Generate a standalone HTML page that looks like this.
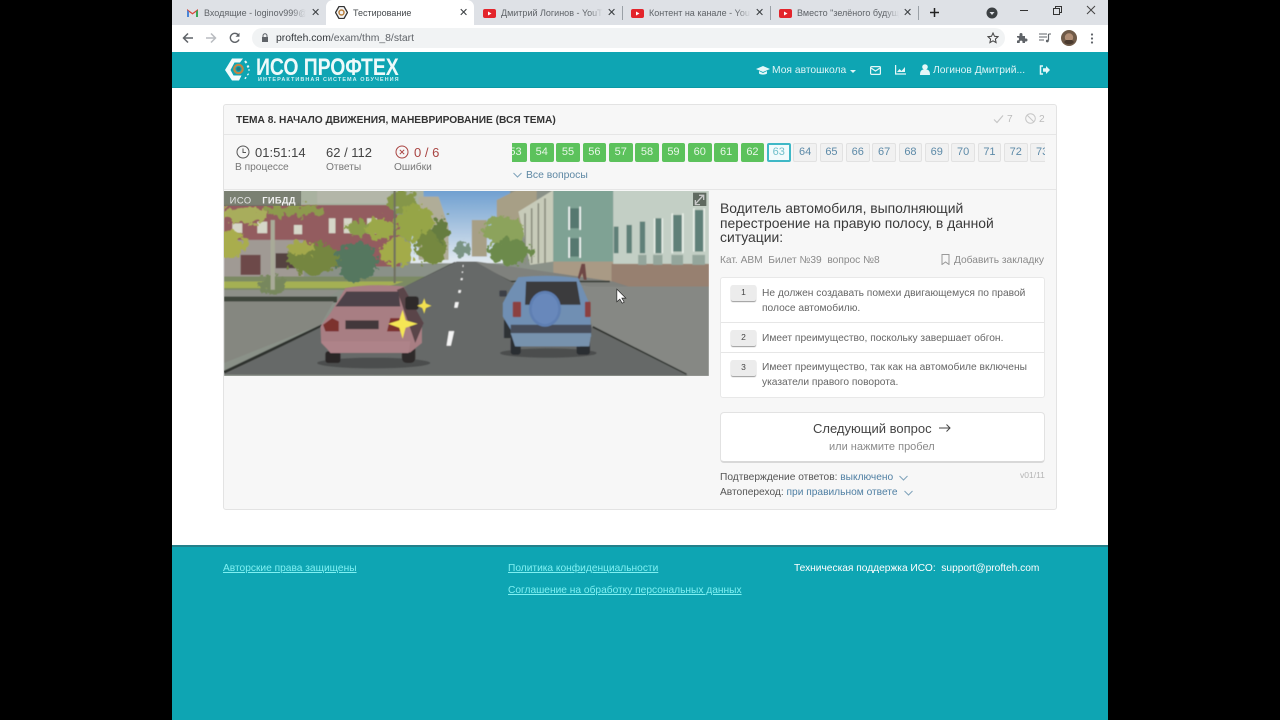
<!DOCTYPE html>
<html lang="ru"><head><meta charset="utf-8"><title>Тестирование</title>
<style>
html,body{margin:0;padding:0;background:#000;width:1280px;height:720px;overflow:hidden}
*{box-sizing:border-box}
body{font-family:"Liberation Sans","DejaVu Sans",sans-serif;position:relative}
.a{position:absolute;white-space:nowrap}
svg{display:block}
.tab{font-size:9px;line-height:12px;color:#5f6368;top:7px;overflow:hidden;-webkit-mask-image:linear-gradient(90deg,#000 86%,transparent);mask-image:linear-gradient(90deg,#000 86%,transparent)}
.x{font-size:11px;color:#3c4043;top:6px;line-height:14px}
.q{position:absolute;top:3px;width:23.500px;height:19px;border-radius:2px;font-size:11px;line-height:19px;text-align:center}
.g{background:#5cc25c;color:#e8f6e8}
.n{background:#f1f1f1;border:1px solid #e2e2e2;color:#5d8aa8;line-height:17px}
.c{background:#f2fbfc;border:2px solid #3fb8c6;color:#6fbfca;line-height:15px}
.num{position:absolute;left:731px;width:25px;height:16px;background:#ececec;border-radius:2px;box-shadow:0 1px 1px #999;font:8.500px/15px "Liberation Sans",sans-serif;color:#444;text-align:center}
.ans{font-size:10.230px;line-height:15px;color:#666;left:762px}
.ft{font-size:10.200px;top:562px;line-height:13px;color:#7ff0f2;text-decoration:underline}
.s{font-size:10.200px;line-height:13px}
</style></head><body>

<!-- chrome -->
<div class="a" style="left:172px;top:0;width:936px;height:25px;background:#dee1e6"></div>
<div class="a" style="left:172px;top:25px;width:936px;height:27px;background:#fff"></div>
<div class="a" style="left:326px;top:0;width:148px;height:26px;background:#fff;border-radius:7px 7px 0 0"></div>
<svg class="a" style="left:187px;top:9px" width="11" height="8" viewBox="0 0 11 8"><path d="M0 8V0l5.500 4L11 0v8H9V3L5.500 5.500 2 3v5z" fill="#d9473a"/><path d="M2 2.500V8H0V1z" fill="#4a86d8"/><path d="M9 2.500V8h2V1z" fill="#3aa757"/></svg>
<div class="a tab" style="left:204px;width:102px">Входящие - loginov999@gmail.com</div>
<div class="a x" style="left:311px">✕</div>
<svg class="a" style="left:335px;top:6px" width="13" height="13" viewBox="0 0 13 13"><path d="M4 .5h5l3.500 6-3.500 6H4L.5 6.500z" fill="#f4f4f4" stroke="#333" stroke-width="1.300"/><circle cx="6.500" cy="6.500" r="2.500" fill="none" stroke="#b9803e" stroke-width="1.500"/></svg>
<div class="a" style="left:353px;top:7px;font-size:9px;line-height:12px;color:#45494d">Тестирование</div>
<div class="a x" style="left:459px">✕</div>
<svg class="a" style="left:483px;top:9px" width="13" height="9" viewBox="0 0 13 9"><rect width="13" height="9" rx="2" fill="#e3242b"/><path d="M5 2.500v4l3.500-2z" fill="#fff"/></svg>
<div class="a tab" style="left:501px;width:102px">Дмитрий Логинов - YouTube</div>
<div class="a x" style="left:607px">✕</div>
<div class="a" style="left:622px;top:6px;width:1px;height:14px;background:#9aa0a6"></div>
<svg class="a" style="left:631px;top:9px" width="13" height="9" viewBox="0 0 13 9"><rect width="13" height="9" rx="2" fill="#e3242b"/><path d="M5 2.500v4l3.500-2z" fill="#fff"/></svg>
<div class="a tab" style="left:649px;width:102px">Контент на канале - YouTube</div>
<div class="a x" style="left:755px">✕</div>
<div class="a" style="left:770px;top:6px;width:1px;height:14px;background:#9aa0a6"></div>
<svg class="a" style="left:779px;top:9px" width="13" height="9" viewBox="0 0 13 9"><rect width="13" height="9" rx="2" fill="#e3242b"/><path d="M5 2.500v4l3.500-2z" fill="#fff"/></svg>
<div class="a tab" style="left:797px;width:102px">Вместо "зелёного будущего"</div>
<div class="a x" style="left:903px">✕</div>
<div class="a" style="left:918px;top:6px;width:1px;height:14px;background:#9aa0a6"></div>
<svg class="a" style="left:929px;top:7px" width="11" height="11" viewBox="0 0 11 11"><path d="M5.500 1v9M1 5.500h9" stroke="#222" stroke-width="1.500"/></svg>
<svg class="a" style="left:986px;top:7px" width="12" height="12" viewBox="0 0 12 12"><circle cx="6" cy="6" r="5.500" fill="#3c4043"/><path d="M3.500 5h5L6 8z" fill="#dee1e6"/></svg>
<div class="a" style="left:1020px;top:10px;width:8px;height:1px;background:#333"></div>
<svg class="a" style="left:1053px;top:6px" width="9" height="9" viewBox="0 0 9 9"><path d="M.5 2.500h6v6h-6zM2.500 2.500v-2h6v6h-2" fill="none" stroke="#333"/></svg>
<svg class="a" style="left:1086px;top:5px" width="10" height="10" viewBox="0 0 10 10"><path d="M1 1l8 8M9 1L1 9" stroke="#444" stroke-width="1"/></svg>

<svg class="a" style="left:182px;top:32px" width="12" height="12" viewBox="0 0 12 12"><path d="M11 6H2M6 1.500L1.500 6 6 10.500" fill="none" stroke="#5f6368" stroke-width="1.500"/></svg>
<svg class="a" style="left:205px;top:32px" width="12" height="12" viewBox="0 0 12 12"><path d="M1 6h9M6 1.500L10.500 6 6 10.500" fill="none" stroke="#b9bcc0" stroke-width="1.500"/></svg>
<svg class="a" style="left:229px;top:32px" width="12" height="12" viewBox="0 0 12 12"><path d="M10 7.500A4.500 4.500 0 1 1 9.200 2.800" fill="none" stroke="#5f6368" stroke-width="1.400"/><path d="M10.500 .8v4h-4z" fill="#5f6368"/></svg>
<div class="a" style="left:252px;top:28px;width:753px;height:20px;background:#f1f3f4;border-radius:10px"></div>
<svg class="a" style="left:261px;top:33px" width="8" height="10" viewBox="0 0 8 10"><path d="M2 4V2.800a2 2 0 0 1 4 0V4" fill="none" stroke="#5f6368"/><rect x="1" y="4" width="6" height="5" fill="#5f6368"/></svg>
<div class="a" style="left:276px;top:33px;font-size:10.400px;line-height:12px;color:#5f6368"><span style="color:#33373b">profteh.com</span>/exam/thm_8/start</div>
<svg class="a" style="left:987px;top:32px" width="12" height="12" viewBox="0 0 12 12"><path d="M6 1l1.500 3.300 3.500.4-2.600 2.400.7 3.500L6 8.800 2.900 10.600l.7-3.500L1 4.700l3.500-.4z" fill="none" stroke="#444" stroke-width="1"/></svg>
<svg class="a" style="left:1016px;top:32px" width="12" height="12" viewBox="0 0 12 12"><path d="M1 4h2.500V2.500a1.500 1.500 0 0 1 3 0V4H9v2.500h1a1.500 1.500 0 0 1 0 3H9V11H6.500v-1a1.400 1.400 0 0 0-2.800 0v1H1V8.500h.5a1.500 1.500 0 0 0 0-3H1z" fill="#5f6368"/></svg>
<svg class="a" style="left:1039px;top:33px" width="12" height="10" viewBox="0 0 12 10"><path d="M0 1h8M0 4h8M0 7h5" stroke="#5f6368" stroke-width="1.100"/><path d="M9.500 1v6.500" stroke="#5f6368" stroke-width="1.200"/><path d="M9.500 1H12" stroke="#5f6368"/><circle cx="8.300" cy="8" r="1.400" fill="#5f6368"/></svg>
<svg class="a" style="left:1061px;top:30px" width="16" height="16" viewBox="0 0 16 16"><circle cx="8" cy="8" r="8" fill="#6f5a48"/><circle cx="8" cy="7.500" r="4.200" fill="#b08d74"/><path d="M3 12c2 3 8 3 10 0l-2-2H5z" fill="#4a3a2e"/></svg>
<svg class="a" style="left:1090px;top:33px" width="4" height="11" viewBox="0 0 4 11"><circle cx="2" cy="1.500" r="1.100" fill="#5f6368"/><circle cx="2" cy="5.500" r="1.100" fill="#5f6368"/><circle cx="2" cy="9.500" r="1.100" fill="#5f6368"/></svg>

<!-- page -->
<div class="a" style="left:172px;top:52px;width:936px;height:668px;background:#fff"></div>
<div class="a" style="left:172px;top:52px;width:936px;height:36px;background:#0ea5b3;border-bottom:1px solid #0b98a5"></div>
<svg class="a" style="left:224px;top:56px" width="27" height="27" viewBox="0 0 27 27"><path d="M8 2.500h11l-3 4h-5.500L6.500 14l3 5.500h8l-2.500 5H8L1 14z" fill="#f2fbfc"/><circle cx="14.500" cy="13" r="4.200" fill="none" stroke="#c08545" stroke-width="2.200"/><circle cx="14.500" cy="13" r="2" fill="#1d7a86"/><path d="M21 5l1.500 2M23.500 9.500l1 2M24.500 14h1M23.500 18l1 .8M21 21.500l1 1" stroke="#e8f8f8" stroke-width="2"/></svg>
<div class="a" style="left:256px;top:54px;font-size:24px;line-height:27px;font-weight:bold;color:#eefafa;letter-spacing:-.1px;transform:scaleX(.81);transform-origin:0 0">ИСО ПРОФТЕХ</div>
<div class="a" style="left:258px;top:77px;font-size:5.500px;line-height:7px;font-weight:bold;color:#c9eef1;letter-spacing:1.050px">ИНТЕРАКТИВНАЯ СИСТЕМА ОБУЧЕНИЯ</div>

<svg class="a" style="left:756px;top:66px" width="14" height="9" viewBox="0 0 14 9"><path d="M0 3l7-3 7 3-7 3z" fill="#e4f7f8"/><path d="M3 5v2.500c2 1.500 6 1.500 8 0V5L7 7z" fill="#e4f7f8"/></svg>
<div class="a" style="left:772px;top:64px;font-size:10.300px;line-height:13px;color:#dff5f7">Моя автошкола</div>
<div class="a" style="left:850px;top:70px;width:0;height:0;border:3px solid transparent;border-top-color:#dff5f7"></div>
<svg class="a" style="left:870px;top:66px" width="11" height="9" viewBox="0 0 11 9"><rect x=".6" y=".6" width="9.800" height="7.800" rx="1" fill="none" stroke="#e4f7f8" stroke-width="1.200"/><path d="M1 2l4.500 3L10 2" fill="none" stroke="#e4f7f8" stroke-width="1.200"/></svg>
<svg class="a" style="left:895px;top:65px" width="11" height="10" viewBox="0 0 11 10"><path d="M.6 0v9H11" fill="none" stroke="#e4f7f8" stroke-width="1.200"/><path d="M2 7l2.500-3L6.500 6 10 2v5z" fill="#e4f7f8"/></svg>
<svg class="a" style="left:920px;top:64px" width="10" height="11" viewBox="0 0 10 11"><circle cx="5" cy="3" r="2.800" fill="#e4f7f8"/><path d="M0 11c0-5 2-5.500 5-5.500S10 6 10 11z" fill="#e4f7f8"/></svg>
<div class="a" style="left:933px;top:64px;font-size:10.300px;line-height:13px;color:#dff5f7">Логинов Дмитрий...</div>
<svg class="a" style="left:1039px;top:65px" width="11" height="10" viewBox="0 0 11 10"><path d="M4 1H1.500v8H4" fill="none" stroke="#e4f7f8" stroke-width="1.500"/><path d="M4 3.200h3V1l4 4-4 4V6.800H4z" fill="#e4f7f8"/></svg>

<!-- panel -->
<div class="a" style="left:223px;top:104px;width:834px;height:406px;background:#f7f7f7;border:1px solid #e3e3e3;border-radius:3px"></div>
<div class="a" style="left:224px;top:134px;width:832px;height:1px;background:#e6e6e6"></div>
<div class="a" style="left:224px;top:189px;width:832px;height:1px;background:#e6e6e6"></div>
<div class="a s" style="left:236px;top:114px;font-size:10.200px;font-weight:bold;color:#333">ТЕМА 8. НАЧАЛО ДВИЖЕНИЯ, МАНЕВРИРОВАНИЕ (ВСЯ ТЕМА)</div>
<svg class="a" style="left:993px;top:114px" width="11" height="10" viewBox="0 0 11 10"><path d="M1 5.500L4 8.500 10 1.500" fill="none" stroke="#c6c6c6" stroke-width="1.200"/></svg>
<div class="a s" style="left:1007px;top:113px;color:#bbb">7</div>
<svg class="a" style="left:1025px;top:113px" width="11" height="11" viewBox="0 0 11 11"><circle cx="5.500" cy="5.500" r="4.800" fill="none" stroke="#c6c6c6"/><path d="M2 2l7 7" stroke="#c6c6c6"/></svg>
<div class="a s" style="left:1039px;top:113px;color:#bbb">2</div>

<svg class="a" style="left:236px;top:145px" width="14" height="14" viewBox="0 0 14 14"><circle cx="7" cy="7" r="6" fill="none" stroke="#555" stroke-width="1"/><path d="M7 3.500V7.500H10" fill="none" stroke="#555"/></svg>
<div class="a" style="left:255px;top:144px;font-size:13px;line-height:17px;color:#444">01:51:14</div>
<div class="a s" style="left:235px;top:161px;color:#777">В процессе</div>
<div class="a" style="left:326px;top:144px;font-size:13px;line-height:17px;color:#444">62 / 112</div>
<div class="a s" style="left:326px;top:161px;color:#777">Ответы</div>
<svg class="a" style="left:395px;top:145px" width="14" height="14" viewBox="0 0 14 14"><circle cx="7" cy="7" r="6" fill="none" stroke="#a94442"/><path d="M4.800 4.800l4.400 4.400M9.200 4.800l-4.400 4.400" stroke="#a94442"/></svg>
<div class="a" style="left:414px;top:144px;font-size:13px;line-height:17px;color:#a94442">0 / 6</div>
<div class="a s" style="left:394px;top:161px;color:#777">Ошибки</div>

<div class="a" style="left:512px;top:140px;width:533px;height:26px;overflow:hidden">
<div class="q g" style="left:-8.300px">53</div><div class="q g" style="left:18px">54</div><div class="q g" style="left:44.300px">55</div><div class="q g" style="left:70.600px">56</div><div class="q g" style="left:97px">57</div><div class="q g" style="left:123.300px">58</div><div class="q g" style="left:149.700px">59</div><div class="q g" style="left:176px">60</div><div class="q g" style="left:202.400px">61</div><div class="q g" style="left:228.700px">62</div>
<div class="q c" style="left:255px">63</div><div class="q n" style="left:281.400px">64</div><div class="q n" style="left:307.700px">65</div><div class="q n" style="left:334px">66</div><div class="q n" style="left:360.400px">67</div><div class="q n" style="left:386.700px">68</div><div class="q n" style="left:413px">69</div><div class="q n" style="left:439.400px">70</div><div class="q n" style="left:465.700px">71</div><div class="q n" style="left:492px">72</div><div class="q n" style="left:518.400px">73</div>
</div>
<svg class="a" style="left:513px;top:172px" width="9" height="6" viewBox="0 0 9 6"><path d="M.5 1L4.500 5 8.500 1" fill="none" stroke="#7fa3bb"/></svg>
<div class="a" style="left:526px;top:169px;font-size:10.400px;line-height:13px;color:#5d87a3">Все вопросы</div>

<!-- photo -->
<svg class="a" style="left:224px;top:191px" width="485" height="185" viewBox="0 3 1458 556" preserveAspectRatio="none">
<defs><filter id="b"><feGaussianBlur stdDeviation="1.800"/></filter>
<filter id="t" x="-20%" y="-20%" width="140%" height="140%"><feTurbulence type="fractalNoise" baseFrequency=".05" numOctaves="3" seed="4" result="n"/><feDisplacementMap in="SourceGraphic" in2="n" scale="46" xChannelSelector="R" yChannelSelector="G"/><feGaussianBlur stdDeviation="1.600"/></filter>
<linearGradient id="s" x1="0" y1="0" x2="0" y2="1"><stop offset="0" stop-color="#6f9fd0"/><stop offset="1" stop-color="#e3eaf0"/></linearGradient></defs>
<g filter="url(#b)">
<rect width="1458" height="560" fill="#8a9188"/>
<rect x="560" y="0" width="300" height="220" fill="url(#s)"/>
<rect x="0" y="0" width="600" height="60" fill="#a9b2a0"/>
<path d="M0 45H500L530 90V230H0z" fill="#935c5e"/>
<path d="M280 0H500V40H280z" fill="#b3b6a8"/>
<path d="M585 20h60l30 90v100h-90z" fill="#b0ad98"/>
<path d="M0 150H240V260H0z" fill="#a09a94"/>
<path d="M50 195h60v60H50z" fill="#6d4a48"/>
<path d="M155 190h60v45h-60z" fill="#54423f"/>
<path d="M25 100h30v30H25zM100 95h30v35h-30zM210 105h25v28h-25zM315 85h20v45h-20zM360 85h25v45h-25zM430 85h30v45h-30z" fill="#d6d6c8"/>
<path d="M745 90h45v110h-45zM820 30l60-30h60v110H820z" fill="#a79f86"/>
<path d="M885 65L990 0V215L920 225z" fill="#c7cbb9"/>
<path d="M905 70v150M925 55v165M945 40v180M965 25v195" stroke="#8c8f80" stroke-width="5"/>
<rect x="990" y="0" width="180" height="225" fill="#7fa294"/>
<rect x="990" y="215" width="180" height="60" fill="#a99a85"/>
<rect x="1170" y="0" width="288" height="225" fill="#c3cfc5"/>
<path d="M1165 222H1458V365L1165 290z" fill="#97806f"/>
<g fill="#56786f"><rect x="1040" y="55" width="28" height="60"/><rect x="1040" y="145" width="28" height="55"/></g>
<g fill="#fff" opacity=".9"><rect x="1035" y="50" width="5" height="70"/><rect x="1068" y="50" width="5" height="70"/><rect x="1035" y="142" width="5" height="62"/><rect x="1068" y="142" width="5" height="62"/></g>
<g fill="#5f8078"><rect x="1172" y="110" width="14" height="80"/><rect x="1210" y="105" width="16" height="85"/><rect x="1250" y="95" width="16" height="95"/><rect x="1297" y="85" width="18" height="105"/><rect x="1350" y="75" width="26" height="110"/><rect x="1415" y="60" width="26" height="125"/></g>
<g fill="#e8efe8"><rect x="1345" y="70" width="5" height="120"/><rect x="1377" y="70" width="5" height="120"/><rect x="1410" y="55" width="5" height="130"/><rect x="1441" y="55" width="5" height="130"/><rect x="1292" y="85" width="4" height="105"/><rect x="1316" y="85" width="4" height="105"/></g>
<g fill="#94a69c"><rect x="1345" y="195" width="35" height="30"/><rect x="1408" y="195" width="38" height="30"/><rect x="1290" y="195" width="28" height="30"/><rect x="1245" y="195" width="25" height="30"/></g>
<rect x="0" y="260" width="700" height="40" fill="#7b8a63"/>
<path d="M0 275H540L480 295H0z" fill="#a4b052"/>
<path d="M0 300H350L300 330H0z" fill="#8e9089"/>
<path d="M0 320H340V338H0z" fill="#3f463e"/>
<path d="M0 335H330L290 405 0 520z" fill="#858780"/>
<path d="M0 545L300 405 700 215H760L1170 275 1458 370V558H1390L1110 415 750 215 700 215 560 290 0 558z" fill="#7f817d"/>
<path d="M1100 290H1458V365L1458 558H1395L1110 415 1070 285z" fill="#868884"/>
<path d="M0 548L295 408" stroke="#2f332f" stroke-width="9"/>
<path d="M1108 412L1390 555" stroke="#2f332f" stroke-width="7"/>
<path d="M550 290L695 218" stroke="#3b3f3a" stroke-width="5"/>
<path d="M755 222L860 275H1160" stroke="#3b3f3a" stroke-width="5" fill="none"/>
<path d="M0 555L300 408 700 215H755L1110 415 1395 558z" fill="#666968"/>
<path d="M676 424h16l-10 44h-13zM695 337h11l-4 17h-10zM705 301h8l-2 8h-7zM712 265h6l-1 6h-6zM715 245h4l-1 4h-3zM718 225h2v6h-3z" fill="#f4f4f4"/>
</g>
<g filter="url(#t)">
<ellipse cx="60" cy="75" rx="75" ry="25" fill="#a8ad5c"/>
<ellipse cx="210" cy="62" rx="90" ry="16" fill="#8d9a4e"/>
<ellipse cx="15" cy="165" rx="50" ry="42" fill="#a9ad4e"/>
<ellipse cx="270" cy="205" rx="80" ry="46" fill="#74863f"/>
<ellipse cx="235" cy="175" rx="40" ry="22" fill="#a2a84c"/>
<ellipse cx="400" cy="215" rx="62" ry="58" fill="#55775f"/>
<ellipse cx="410" cy="115" rx="45" ry="20" fill="#8a9c4c"/>
<ellipse cx="535" cy="35" rx="45" ry="32" fill="#85964a"/>
<ellipse cx="470" cy="115" rx="45" ry="30" fill="#9ba84a"/>
<ellipse cx="575" cy="100" rx="58" ry="55" fill="#96a546"/>
<ellipse cx="520" cy="185" rx="50" ry="42" fill="#a3ab4a"/>
<ellipse cx="625" cy="170" rx="45" ry="55" fill="#74883f"/>
<ellipse cx="655" cy="120" rx="20" ry="40" fill="#657c3f"/>
<ellipse cx="840" cy="125" rx="62" ry="46" fill="#8ca35c"/>
<ellipse cx="860" cy="185" rx="62" ry="40" fill="#6c8a4c"/>
<ellipse cx="145" cy="285" rx="42" ry="28" fill="#77875d"/>
<ellipse cx="716" cy="178" rx="26" ry="22" fill="#7a9484"/>
</g>
<g filter="url(#b)">
<rect x="140" y="90" width="13" height="210" fill="#a9aa98"/><rect x="510" y="0" width="6" height="280" fill="#6f7060"/>
<path d="M1075 222l10 0 5 48-8 0-5-20-10 20h-5z" fill="#6e4744"/>
<ellipse cx="450" cy="520" rx="170" ry="16" fill="#4c4e4d"/><ellipse cx="975" cy="490" rx="145" ry="14" fill="#4c4e4e"/>
<!-- red car -->
<rect x="305" y="485" width="45" height="35" rx="8" fill="#2a2728"/><rect x="535" y="430" width="40" height="90" rx="14" fill="#2d2a2a"/>
<path d="M365 295Q440 280 540 290L595 400V460L560 488H320L292 460 290 410 320 370z" fill="#a87e83"/>
<path d="M540 292L600 400 575 460 520 300z" fill="#5a4548"/>
<path d="M368 305H525L530 350H335z" fill="#4e4348"/>
<path d="M325 385L345 395V425H305L298 405z" fill="#7c302f"/><path d="M500 385H530V425H490z" fill="#7c302f"/>
<path d="M365 392H465V418H365z" fill="#43383a"/>
<path d="M292 455H560L555 490H320z" fill="#ae8389"/>
<rect x="545" y="320" width="40" height="40" rx="8" fill="#2e2b2c"/>
<!-- stars -->
<path d="M537 360l9 32 36 10-36 12-9 33-10-33-33-12 33-10z" fill="#f5e654"/>
<path d="M602 325l5 16 17 7-17 7-5 17-6-17-15-7 15-7z" fill="#f2e04f"/>
<!-- blue car -->
<rect x="862" y="430" width="30" height="65" rx="8" fill="#2b2e33"/><rect x="1060" y="430" width="40" height="65" rx="8" fill="#2b2e33"/><rect x="842" y="390" width="20" height="55" fill="#2f3136"/>
<path d="M885 262Q980 252 1065 265L1100 345 1104 440 1070 470H880L862 420 838 380 838 340 860 300z" fill="#6f8fb3"/>
<path d="M908 275H1060L1072 345H905z" fill="#3a3a3d"/>
<path d="M862 405H1104V435H862z" fill="#464e5a"/>
<path d="M862 430H1104L1098 470H875z" fill="#7792ad"/>
<rect x="868" y="336" width="25" height="46" rx="3" fill="#8b4140"/><rect x="1085" y="336" width="17" height="46" rx="3" fill="#8b4140"/>
<rect x="828" y="302" width="22" height="18" rx="3" fill="#3c4047"/>
<ellipse cx="965" cy="357" rx="48" ry="54" fill="#5f7fb2"/><ellipse cx="965" cy="357" rx="40" ry="46" fill="#6788bb"/>
</g>
<!-- overlays -->
<rect x="0" y="3" width="232" height="45" fill="#6b6f63" opacity=".75"/>
<text x="17" y="41" font-family="Liberation Sans, sans-serif" font-size="28" fill="#e8e8e8" letter-spacing="1.500">ИСО</text>
<text x="115" y="41" font-family="Liberation Sans, sans-serif" font-size="28" font-weight="bold" fill="#f0f0f0" letter-spacing="1">ГИБДД</text>
<rect x="1410" y="8" width="40" height="40" fill="#5f6a60"/>
<path d="M1417 42l22-24M1428 16h14v14M1417 30v14h14" stroke="#c8c8c8" stroke-width="4" fill="none"/>
<path d="M1181 298v38l9-8 7 12 6-3-7-12h12z" fill="#fff" stroke="#222" stroke-width="2"/>
</svg>

<!-- question -->
<div class="a" style="left:720px;top:201px;font-size:13.900px;line-height:14.700px;color:#3a3a3a">Водитель автомобиля, выполняющий<br>перестроение на правую полосу, в данной<br>ситуации:</div>
<div class="a s" style="left:720px;top:254px;color:#8a8a8a">Кат. АВМ&nbsp; Билет №39&nbsp; вопрос №8</div>
<svg class="a" style="left:941px;top:254px" width="9" height="11" viewBox="0 0 9 11"><path d="M1 .5h7v10L4.500 8 1 10.500z" fill="none" stroke="#999"/></svg>
<div class="a s" style="left:954px;top:254px;color:#8a8a8a">Добавить закладку</div>

<div class="a" style="left:720px;top:277px;width:325px;height:121px;background:#fff;border:1px solid #e8e8e8;border-radius:3px"></div>
<div class="a" style="left:721px;top:322px;width:323px;height:1px;background:#e6e6e6"></div>
<div class="a" style="left:721px;top:352px;width:323px;height:1px;background:#e6e6e6"></div>
<div class="num" style="top:285px">1</div>
<div class="a ans" style="top:286px">Не должен создавать помехи двигающемуся по правой<br>полосе автомобилю.</div>
<div class="num" style="top:330px">2</div>
<div class="a ans" style="top:331px">Имеет преимущество, поскольку завершает обгон.</div>
<div class="num" style="top:360px">3</div>
<div class="a ans" style="top:360px">Имеет преимущество, так как на автомобиле включены<br>указатели правого поворота.</div>

<div class="a" style="left:720px;top:412px;width:325px;height:51px;background:#fff;border:1px solid #e2e2e2;border-bottom:2px solid #d8d8d8;border-radius:4px"></div>
<div class="a" style="left:813px;top:421px;font-size:13px;line-height:15px;color:#444">Следующий вопрос</div>
<svg class="a" style="left:939px;top:423px" width="12" height="10" viewBox="0 0 12 10"><path d="M0 5h11M7.500 1.500L11 5 7.500 8.500" fill="none" stroke="#444"/></svg>
<div class="a" style="left:829px;top:441px;font-size:11px;line-height:13px;color:#8a8a8a">или нажмите пробел</div>

<div class="a s" style="left:720px;top:471px;color:#555">Подтверждение ответов: <span style="color:#4f7fa3">выключено</span></div>
<svg class="a" style="left:899px;top:475px" width="9" height="6" viewBox="0 0 9 6"><path d="M.5 1L4.500 5 8.500 1" fill="none" stroke="#7fa3bb"/></svg>
<div class="a s" style="left:720px;top:486px;color:#555">Автопереход: <span style="color:#4f7fa3">при правильном ответе</span></div>
<svg class="a" style="left:904px;top:490px" width="9" height="6" viewBox="0 0 9 6"><path d="M.5 1L4.500 5 8.500 1" fill="none" stroke="#7fa3bb"/></svg>
<div class="a" style="left:1020px;top:470px;font-size:8.500px;line-height:11px;color:#b5b5b5">v01/11</div>

<!-- footer -->
<div class="a" style="left:172px;top:545px;width:936px;height:175px;background:#0ea5b3;border-top:2px solid #23808a"></div>
<div class="a ft" style="left:223px">Авторские права защищены</div>
<div class="a ft" style="left:508px">Политика конфиденциальности</div>
<div class="a ft" style="left:508px;top:584px">Соглашение на обработку персональных данных</div>
<div class="a" style="left:794px;top:562px;font-size:10.200px;line-height:13px;color:#fff">Техническая поддержка ИСО:&nbsp; support@profteh.com</div>

</body></html>
